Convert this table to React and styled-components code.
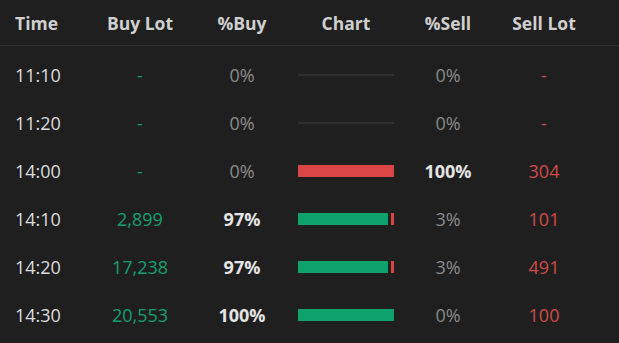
import React from "react";
import styled, { createGlobalStyle } from "styled-components";

const GlobalStyle = createGlobalStyle`
  html, body {
    margin: 0;
    padding: 0;
    background-color: #1f1f1f;
  }
`;

const COLS = "89px 102px 102px 106px 98px 94px 1fr";

const Table = styled.div`
  width: 619px;
  min-height: 343px;
  background-color: #1f1f1f;
  font-family: "Open Sans", "Noto Sans", sans-serif;
`;

const HeaderRow = styled.div`
  display: grid;
  grid-template-columns: ${COLS};
  height: 45px;
  align-items: center;
  border-bottom: 1px solid #2f2f2f;
`;

const HeadCell = styled.div`
  font-size: 17.5px;
  font-weight: 700;
  color: #cfcfcf;
  text-align: ${(props) => (props.left ? "left" : "center")};
  padding-left: ${(props) => (props.left ? "15px" : "0")};
`;

const Body = styled.div`
  padding-top: 5px;
`;

const Row = styled.div`
  display: grid;
  grid-template-columns: ${COLS};
  height: 48px;
  align-items: center;
`;

const Cell = styled.div`
  font-size: 18px;
  text-align: ${(props) => (props.left ? "left" : "center")};
  padding-left: ${(props) => (props.left ? "15px" : "0")};
  color: ${(props) => props.color || "#dcdcdc"};
  font-weight: ${(props) => (props.bold ? 700 : 400)};
`;

const ChartCell = styled.div`
  display: flex;
  justify-content: center;
`;

const Bar = styled.div`
  width: 96px;
  height: 12px;
  display: flex;
  gap: 3px;
`;

const EmptyLine = styled.div`
  width: 96px;
  height: 2px;
  background-color: #2f2f2f;
`;

const Segment = styled.div`
  height: 100%;
  background-color: ${(props) => (props.sell ? "#dc4545" : "#0fa16b")};
`;

const GREEN = "#14a06e";
const RED = "#d24a4a";
const GREY = "#8a8a8a";

const rows = [
  { time: "11:10", buy: "-", pb: 0, ps: 0, sell: "-", empty: true },
  { time: "11:20", buy: "-", pb: 0, ps: 0, sell: "-", empty: true },
  { time: "14:00", buy: "-", pb: 0, ps: 100, sell: "304" },
  { time: "14:10", buy: "2,899", pb: 97, ps: 3, sell: "101" },
  { time: "14:20", buy: "17,238", pb: 97, ps: 3, sell: "491" },
  { time: "14:30", buy: "20,553", pb: 100, ps: 0, sell: "100" },
];

function Chart({ pb, ps, empty }) {
  if (empty) return <EmptyLine />;
  return (
    <Bar>
      {pb > 0 && <Segment style={{ flex: pb }} />}
      {ps > 0 && <Segment sell style={{ flex: ps }} />}
    </Bar>
  );
}

export default function App() {
  return (
    <>
      <GlobalStyle />
      <Table>
        <HeaderRow>
          <HeadCell left>Time</HeadCell>
          <HeadCell>Buy Lot</HeadCell>
          <HeadCell>%Buy</HeadCell>
          <HeadCell>Chart</HeadCell>
          <HeadCell>%Sell</HeadCell>
          <HeadCell>Sell Lot</HeadCell>
          <div />
        </HeaderRow>
        <Body>
          {rows.map((r) => {
            const buyBold = r.pb > r.ps;
            const sellBold = r.ps > r.pb;
            return (
              <Row key={r.time}>
                <Cell left>{r.time}</Cell>
                <Cell color={GREEN}>{r.buy}</Cell>
                <Cell bold={buyBold} color={buyBold ? "#e4e4e4" : GREY}>
                  {r.pb}%
                </Cell>
                <ChartCell>
                  <Chart pb={r.pb} ps={r.ps} empty={r.empty} />
                </ChartCell>
                <Cell bold={sellBold} color={sellBold ? "#e4e4e4" : GREY}>
                  {r.ps}%
                </Cell>
                <Cell color={RED}>{r.sell}</Cell>
                <div />
              </Row>
            );
          })}
        </Body>
      </Table>
    </>
  );
}
